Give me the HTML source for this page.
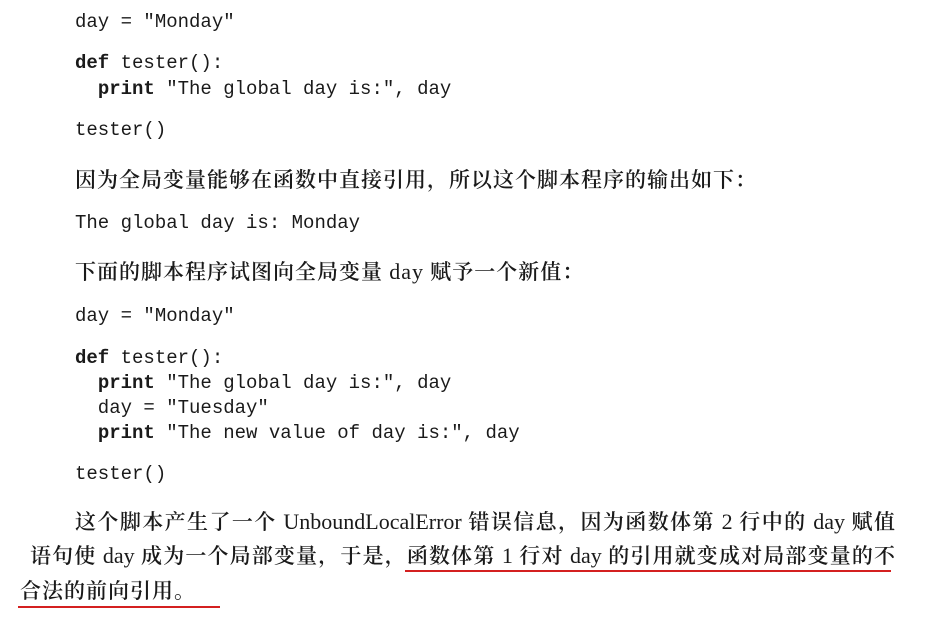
<!DOCTYPE html>
<html><head><meta charset="utf-8"><style>
body{margin:0;width:939px;height:622px;background:#fff;position:relative;overflow:hidden;color:#1a1a1a}
.c{position:absolute;left:75px;font-family:"Liberation Mono",monospace;font-size:19px;line-height:24px;white-space:pre}
.c b{font-weight:bold}
.z{position:absolute;font-family:"Liberation Serif","Noto Serif CJK SC",serif;font-size:21px;line-height:28px;white-space:nowrap;font-weight:600}
.z i{font-style:normal;font-weight:normal;font-size:22px}
.j{text-align:justify;text-align-last:justify;white-space:normal}
.u{position:absolute;height:2px;background:#d42020}
</style></head><body>
<div class="c" style="top:10px">day = "Monday"</div>
<div class="c" style="top:51px"><b>def</b> tester():</div>
<div class="c" style="top:77px">  <b>print</b> "The global day is:", day</div>
<div class="c" style="top:118px">tester()</div>
<div class="z" style="left:75px;top:166px;letter-spacing:1px">因为全局变量能够在函数中直接引用，所以这个脚本程序的输出如下：</div>
<div class="c" style="top:211px">The global day is: Monday</div>
<div class="z" style="left:75px;top:258px;letter-spacing:1px">下面的脚本程序试图向全局变量 <i>day</i> 赋予一个新值：</div>
<div class="c" style="top:304px">day = "Monday"</div>
<div class="c" style="top:346px"><b>def</b> tester():</div>
<div class="c" style="top:371px">  <b>print</b> "The global day is:", day</div>
<div class="c" style="top:396px">  day = "Tuesday"</div>
<div class="c" style="top:421px">  <b>print</b> "The new value of day is:", day</div>
<div class="c" style="top:462px">tester()</div>
<div class="z j" style="left:75px;width:820px;top:508px">这个脚本产生了一个 <i>UnboundLocalError</i> 错误信息，因为函数体第 <i>2</i> 行中的 <i>day</i> 赋值</div>
<div class="z j" style="left:30px;width:865px;top:542px">语句使 <i>day</i> 成为一个局部变量，于是，函数体第 <i>1</i> 行对 <i>day</i> 的引用就变成对局部变量的不</div>
<div class="z" style="left:20px;top:577px;letter-spacing:1px">合法的前向引用。</div>
<div class="u" style="left:405px;width:486px;top:570px"></div>
<div class="u" style="left:18px;width:202px;top:606px"></div>
</body></html>
